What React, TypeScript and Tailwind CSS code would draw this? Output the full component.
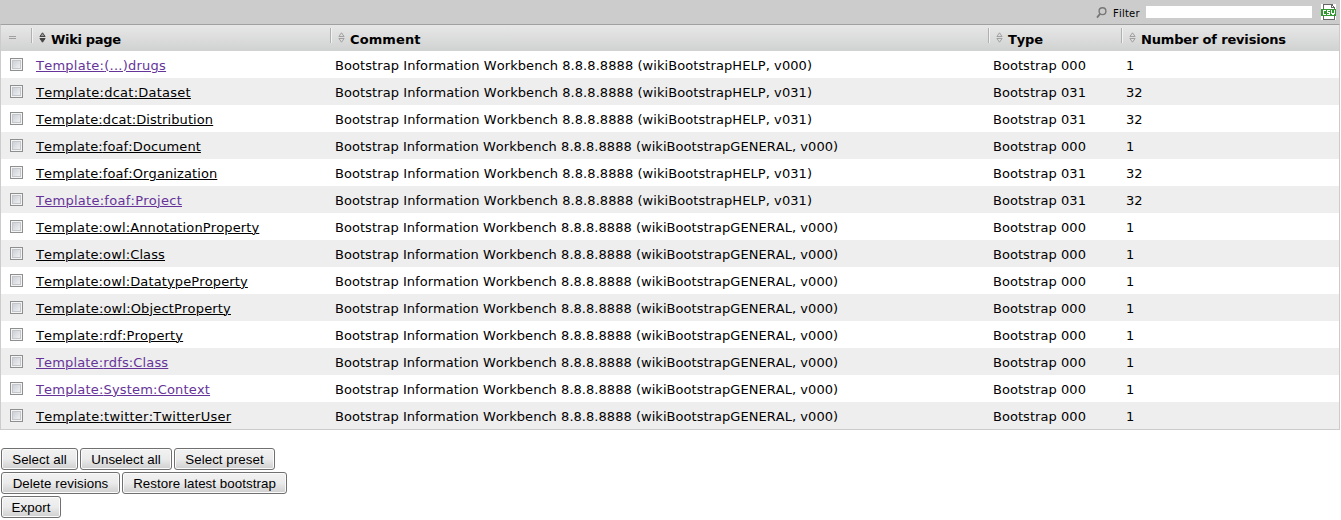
const COLS = 'grid grid-cols-[29px_299px_658px_133px_1fr]';

type Row = {
  page: string;
  tracking: string;
  kind: 'HELP' | 'GENERAL';
  version: string;
  revisions: number;
  visited?: boolean;
};

const rows: Row[] = [
  { page: '(...)drugs', tracking: 'tracking-[0.25px]', kind: 'HELP', version: '000', revisions: 1, visited: true },
  { page: 'dcat:Dataset', tracking: 'tracking-[0.25px]', kind: 'HELP', version: '031', revisions: 32 },
  { page: 'dcat:Distribution', tracking: 'tracking-[0.1px]', kind: 'HELP', version: '031', revisions: 32 },
  { page: 'foaf:Document', tracking: 'tracking-[0.1px]', kind: 'GENERAL', version: '000', revisions: 1 },
  { page: 'foaf:Organization', tracking: 'tracking-[0.1px]', kind: 'HELP', version: '031', revisions: 32 },
  { page: 'foaf:Project', tracking: 'tracking-[0.27px]', kind: 'HELP', version: '031', revisions: 32, visited: true },
  { page: 'owl:AnnotationProperty', tracking: 'tracking-[0.13px]', kind: 'GENERAL', version: '000', revisions: 1 },
  { page: 'owl:Class', tracking: 'tracking-[0.13px]', kind: 'GENERAL', version: '000', revisions: 1 },
  { page: 'owl:DatatypeProperty', tracking: 'tracking-[0.13px]', kind: 'GENERAL', version: '000', revisions: 1 },
  { page: 'owl:ObjectProperty', tracking: 'tracking-[0.17px]', kind: 'GENERAL', version: '000', revisions: 1 },
  { page: 'rdf:Property', tracking: 'tracking-[0.15px]', kind: 'GENERAL', version: '000', revisions: 1 },
  { page: 'rdfs:Class', tracking: 'tracking-[0.15px]', kind: 'GENERAL', version: '000', revisions: 1, visited: true },
  { page: 'System:Context', tracking: 'tracking-[0.18px]', kind: 'GENERAL', version: '000', revisions: 1, visited: true },
  { page: 'twitter:TwitterUser', tracking: 'tracking-[0.24px]', kind: 'GENERAL', version: '000', revisions: 1 },
];

const buttonRows = [
  [
    { label: 'Select all', width: 'w-[77px]' },
    { label: 'Unselect all', width: 'w-[92px]' },
    { label: 'Select preset', width: 'w-[101px]' },
  ],
  [
    { label: 'Delete revisions', width: 'w-[119px]' },
    { label: 'Restore latest bootstrap', width: 'w-[165px]' },
  ],
  [{ label: 'Export', width: 'w-[60px]' }],
];

function SortIcon({ active = false }: { active?: boolean }) {
  const color = active ? '#444' : '#a0a0a0';
  return (
    <svg width="7" height="11" viewBox="0 0 7 11" className="mt-[7px] ml-[6px] shrink-0">
      <path d="M3.5 0.8 L6.1 4.5 H0.9 Z" fill={active ? '#999' : '#ddd'} stroke={color} />
      <path d="M3.5 10.2 L6.1 6.5 H0.9 Z" fill={active ? color : '#ddd'} stroke={color} />
    </svg>
  );
}

function HeaderCell({ label, tracking, active }: { label: string; tracking: string; active?: boolean }) {
  return (
    <div className="flex">
      <div className="mt-[3px] ml-px h-[15px] w-0.5 border-r border-l border-r-[#f2f2f2] border-l-[#b0b0b0]" />
      <SortIcon active={active} />
      <span className={`ml-[5px] pt-[6px] leading-[18px] font-bold whitespace-nowrap ${tracking}`}>{label}</span>
    </div>
  );
}

function CsvIcon() {
  return (
    <svg width="15" height="16" viewBox="0 0 15 16" shapeRendering="crispEdges">
      <path d="M0 0H15V16H0Z" fill="#fff" />
      <path d="M2.5 5V0.5H11L13.5 3.5V5M2.5 12V15.5H13.5V12M10.5 0.5V3.5H13.5" fill="none" stroke="#666" />
      <path d="M0 5H15V12H0Z" fill="#339933" />
      <path d="M5 6.5H2.5V10.5H5M9 6.5H6.5V8.5H8.5V10.5H6M10.5 6V9.5H11.5V11M13.5 6V9.5H12.5V11" fill="none" stroke="#fff" />
    </svg>
  );
}

export default function App() {
  return (
    <div className="h-[520px] w-[1341px] overflow-hidden bg-white font-['DejaVu_Sans',sans-serif] text-[13px] text-black [font-kerning:none]">
      <div className="flex h-6 w-[1340px] items-start bg-[#cccccc]">
        <svg width="11" height="12" viewBox="0 0 11 12" className="mt-[7px] ml-[1096px]">
          <circle cx="6.5" cy="4.2" r="3.4" fill="none" stroke="#777" strokeWidth="1.4" />
          <path d="M4.2 6.6 L1 10.6" stroke="#777" strokeWidth="1.8" />
        </svg>
        <label htmlFor="filter" className="ml-1.5 w-[33px] pt-[6px] text-[10px] leading-[16px] tracking-[0.2px]">Filter</label>
        <input id="filter" className="mt-1.5 h-3 w-[166px] bg-white outline-none" />
        <div className="mt-1 ml-[9px]"><CsvIcon /></div>
      </div>

      <div className="h-[406px] w-[1340px] border border-[#cccccc] border-t-[#a0a0a0]">
        <div className={`${COLS} h-[26px] bg-linear-to-b from-[#e7e7e7] to-[#d0d2d1]`}>
          <div className="flex flex-col gap-px pt-[11px] pl-[8px]">
            <i className="h-px w-[7px] bg-[#a0a0a0]" />
            <i className="h-px w-[7px] bg-[#a0a0a0]" />
          </div>
          <HeaderCell label="Wiki page" tracking="tracking-[-0.33px]" active />
          <HeaderCell label="Comment" tracking="tracking-[0.1px]" />
          <HeaderCell label="Type" tracking="tracking-[-0.13px]" />
          <HeaderCell label="Number of revisions" tracking="tracking-[-0.17px]" />
        </div>
        {rows.map((row) => (
          <div key={row.page} className={`${COLS} h-[27px] leading-[29px] odd:bg-[#eeeeee] even:bg-white`}>
            <div className="pt-[7px] pl-[9px]">
              <input
                type="checkbox"
                className="block size-[13px] appearance-none border border-[#8e8f8f] bg-linear-to-br from-[#c4c8d0] to-[#f8f8f8] shadow-[inset_0_0_0_1px_#f4f4f4,inset_0_0_0_2px_#c3c7cc]"
              />
            </div>
            <div className="pl-[6px] whitespace-nowrap">
              <a
                href="#"
                className={`underline decoration-1 underline-offset-1 ${row.tracking} ${row.visited ? 'text-[#663399]' : 'text-black'}`}
              >
                Template:{row.page}
              </a>
            </div>
            <div className={`pl-[6px] whitespace-nowrap ${row.kind === 'HELP' ? 'tracking-[0.075px]' : 'tracking-[0.04px]'}`}>
              Bootstrap Information Workbench 8.8.8.8888 (wikiBootstrap{row.kind}, v{row.version})
            </div>
            <div className="pl-[6px] tracking-[0.05px]">Bootstrap {row.version}</div>
            <div className="pl-[6px]">{row.revisions}</div>
          </div>
        ))}
      </div>

      <div className="mt-[18px] ml-px flex flex-col gap-0.5 font-['Liberation_Sans',sans-serif] text-[13.33px] tracking-[0.05px]">
        {buttonRows.map((buttons, i) => (
          <div key={i} className="flex gap-0.5">
            {buttons.map(({ label, width }) => (
              <button
                key={label}
                className={`${width} h-[22px] rounded-[3px] border border-[#707070] bg-linear-to-b from-[#f2f2f2] from-0% via-[#ebebeb] via-50% to-[#cfcfcf] pt-px leading-5 whitespace-nowrap shadow-[inset_0_0_0_1px_#fbfbfb]`}
              >
                {label}
              </button>
            ))}
          </div>
        ))}
      </div>
    </div>
  );
}
